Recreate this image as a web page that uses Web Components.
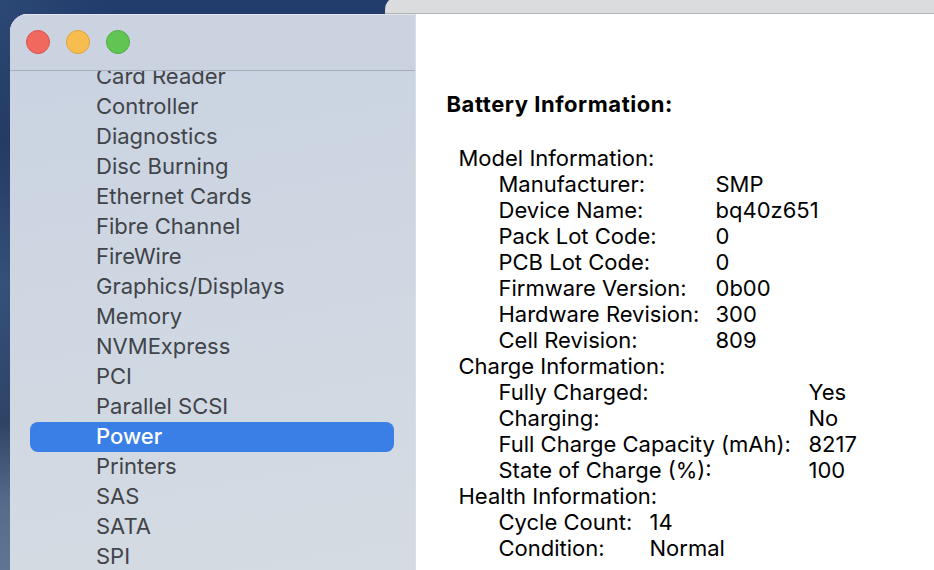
<!DOCTYPE html>
<html>
<head>
<meta charset="utf-8">
<title>System Information</title>
<style>
html, body { margin: 0; height: 100%; overflow: hidden; }
body { font-family: Inter, "Liberation Sans", sans-serif; }
</style>
</head>
<body>
<info-desktop>
  <info-window>
    <side-item>Card Reader</side-item>
    <side-item>Controller</side-item>
    <side-item>Diagnostics</side-item>
    <side-item>Disc Burning</side-item>
    <side-item>Ethernet Cards</side-item>
    <side-item>Fibre Channel</side-item>
    <side-item>FireWire</side-item>
    <side-item>Graphics/Displays</side-item>
    <side-item>Memory</side-item>
    <side-item>NVMExpress</side-item>
    <side-item>PCI</side-item>
    <side-item>Parallel SCSI</side-item>
    <side-item selected>Power</side-item>
    <side-item>Printers</side-item>
    <side-item>SAS</side-item>
    <side-item>SATA</side-item>
    <side-item>SPI</side-item>
    <battery-info slot="detail" heading="Battery Information:">
      <info-group heading="Model Information:" label-width="217px">
        <info-row label="Manufacturer:">SMP</info-row>
        <info-row label="Device Name:">bq40z651</info-row>
        <info-row label="Pack Lot Code:">0</info-row>
        <info-row label="PCB Lot Code:">0</info-row>
        <info-row label="Firmware Version:">0b00</info-row>
        <info-row label="Hardware Revision:">300</info-row>
        <info-row label="Cell Revision:">809</info-row>
      </info-group>
      <info-group heading="Charge Information:" label-width="310px">
        <info-row label="Fully Charged:">Yes</info-row>
        <info-row label="Charging:">No</info-row>
        <info-row label="Full Charge Capacity (mAh):">8217</info-row>
        <info-row label="State of Charge (%):">100</info-row>
      </info-group>
      <info-group heading="Health Information:" label-width="151px">
        <info-row label="Cycle Count:">14</info-row>
        <info-row label="Condition:">Normal</info-row>
      </info-group>
    </battery-info>
  </info-window>
</info-desktop>

<script>
"use strict";

/* small helper so each class can stamp its own shadow root */
function makeTemplate(html) {
    const template = document.createElement('template');
    template.innerHTML = html;
    return template;
}

const desktopTemplate = makeTemplate(`
<style>
:host {
    display: block;
    position: relative;
    width: 934px;
    height: 570px;
    overflow: hidden;
    background:
        linear-gradient(90deg, rgba(34,60,107,0) 0, #223c6b 110px) 0 0 / 100% 14px no-repeat,
        linear-gradient(180deg, #2c4874 0%, #243b64 25%, #36507a 50%, #30476c 68%, #2f4365 74%, #566b89 88%, #5f7591 100%);
}
.back-window {
    position: absolute;
    left: 385px;
    top: -4px;
    width: 600px;
    height: 18px;
    box-sizing: border-box;
    border-top-left-radius: 14px;
    background: #dadcdd;
    border-bottom: 1px solid #b3b4b5;
}
::slotted(info-window) {
    position: absolute;
    left: 10px;
    top: 14px;
}
</style>
<div class="back-window"></div>
<slot></slot>
`);

class InfoDesktop extends HTMLElement {
    constructor() {
        super();
        this.attachShadow({mode: 'open'});
        this.shadowRoot.appendChild(desktopTemplate.content.cloneNode(true));
    }
}

const windowTemplate = makeTemplate(`
<style>
:host {
    display: flex;
    width: 924px;
    height: 556px;
    overflow: hidden;
    border-top-left-radius: 18px;
    background: #fff;
}
.sidebar {
    display: flex;
    flex-direction: column;
    width: 406px;
    flex: none;
    box-sizing: border-box;
    border-right: 1px solid #dcdee0;
    background: linear-gradient(170deg, #c9d2e1 0%, #cfd7e2 50%, #d4dbe2 100%);
}
.titlebar {
    display: flex;
    align-items: center;
    gap: 16px;
    height: 57px;
    flex: none;
    box-sizing: border-box;
    padding: 0 0 0 16px;
    border-bottom: 1px solid #a5adbb;
    background: #cbd3e1;
    box-shadow: inset 0 1px 0 #e2e6ed;
    position: relative;
    z-index: 1;
}
.light {
    width: 24px;
    height: 24px;
    box-sizing: border-box;
    border-radius: 50%;
    border: 1px solid;
}
.close { background: #f1685f; border-color: #d9534b; }
.min { background: #f7bd4e; border-color: #dfa23c; }
.zoom { background: #61c554; border-color: #4fad44; }
.list {
    flex: 1;
    min-height: 0;
    overflow: hidden;
    padding: 0 21px 0 20px;
    margin-top: -9px;
}
.detail {
    flex: 1;
    min-width: 0;
}
</style>
<div class="sidebar">
  <div class="titlebar">
    <span class="light close"></span>
    <span class="light min"></span>
    <span class="light zoom"></span>
  </div>
  <div class="list"><slot></slot></div>
</div>
<div class="detail"><slot name="detail"></slot></div>
`);

class InfoWindow extends HTMLElement {
    constructor() {
        super();
        this.attachShadow({mode: 'open'});
        this.shadowRoot.appendChild(windowTemplate.content.cloneNode(true));
    }
}

const itemTemplate = makeTemplate(`
<style>
:host {
    display: block;
    height: 30px;
    line-height: 28px;
    padding-left: 66px;
    border-radius: 8px;
    font-size: 22px;
    color: #414449;
    white-space: nowrap;
}
:host([selected]) {
    background: #3a7fe6;
    color: #fff;
    font-weight: 500;
}
</style>
<slot></slot>
`);

class SideItem extends HTMLElement {
    constructor() {
        super();
        this.attachShadow({mode: 'open'});
        this.shadowRoot.appendChild(itemTemplate.content.cloneNode(true));
    }
}

const batteryTemplate = makeTemplate(`
<style>
:host {
    display: block;
    padding: 76px 0 0 30.5px;
    color: #000;
}
h2 {
    margin: 0 0 27px;
    font-size: 22px;
    line-height: 28px;
    font-weight: 700;
    letter-spacing: .55px;
}
.groups { padding-left: 12px; }
</style>
<h2 id="heading"></h2>
<div class="groups"><slot></slot></div>
`);

class BatteryInfo extends HTMLElement {
    constructor() {
        super();
        this.attachShadow({mode: 'open'});
        this.shadowRoot.appendChild(batteryTemplate.content.cloneNode(true));
    }

    connectedCallback() {
        this.shadowRoot.getElementById('heading').textContent = this.getAttribute('heading');
    }
}

const groupTemplate = makeTemplate(`
<style>
:host {
    display: block;
    font-size: 22px;
    line-height: 26px;
}
.rows { padding-left: 40px; }
</style>
<div id="heading"></div>
<div class="rows"><slot></slot></div>
`);

class InfoGroup extends HTMLElement {
    constructor() {
        super();
        this.attachShadow({mode: 'open'});
        this.shadowRoot.appendChild(groupTemplate.content.cloneNode(true));
    }

    connectedCallback() {
        this.shadowRoot.getElementById('heading').textContent = this.getAttribute('heading');
        this.style.setProperty('--label-width', this.getAttribute('label-width'));
    }
}

const rowTemplate = makeTemplate(`
<style>
:host {
    display: grid;
    grid-template-columns: var(--label-width) auto;
    justify-content: start;
    white-space: nowrap;
}
</style>
<span id="label"></span>
<span><slot></slot></span>
`);

class InfoRow extends HTMLElement {
    constructor() {
        super();
        this.attachShadow({mode: 'open'});
        this.shadowRoot.appendChild(rowTemplate.content.cloneNode(true));
    }

    connectedCallback() {
        this.shadowRoot.getElementById('label').textContent = this.getAttribute('label');
    }
}

window.customElements.define('info-desktop', InfoDesktop);
window.customElements.define('info-window', InfoWindow);
window.customElements.define('side-item', SideItem);
window.customElements.define('battery-info', BatteryInfo);
window.customElements.define('info-group', InfoGroup);
window.customElements.define('info-row', InfoRow);
</script>
</body>
</html>
